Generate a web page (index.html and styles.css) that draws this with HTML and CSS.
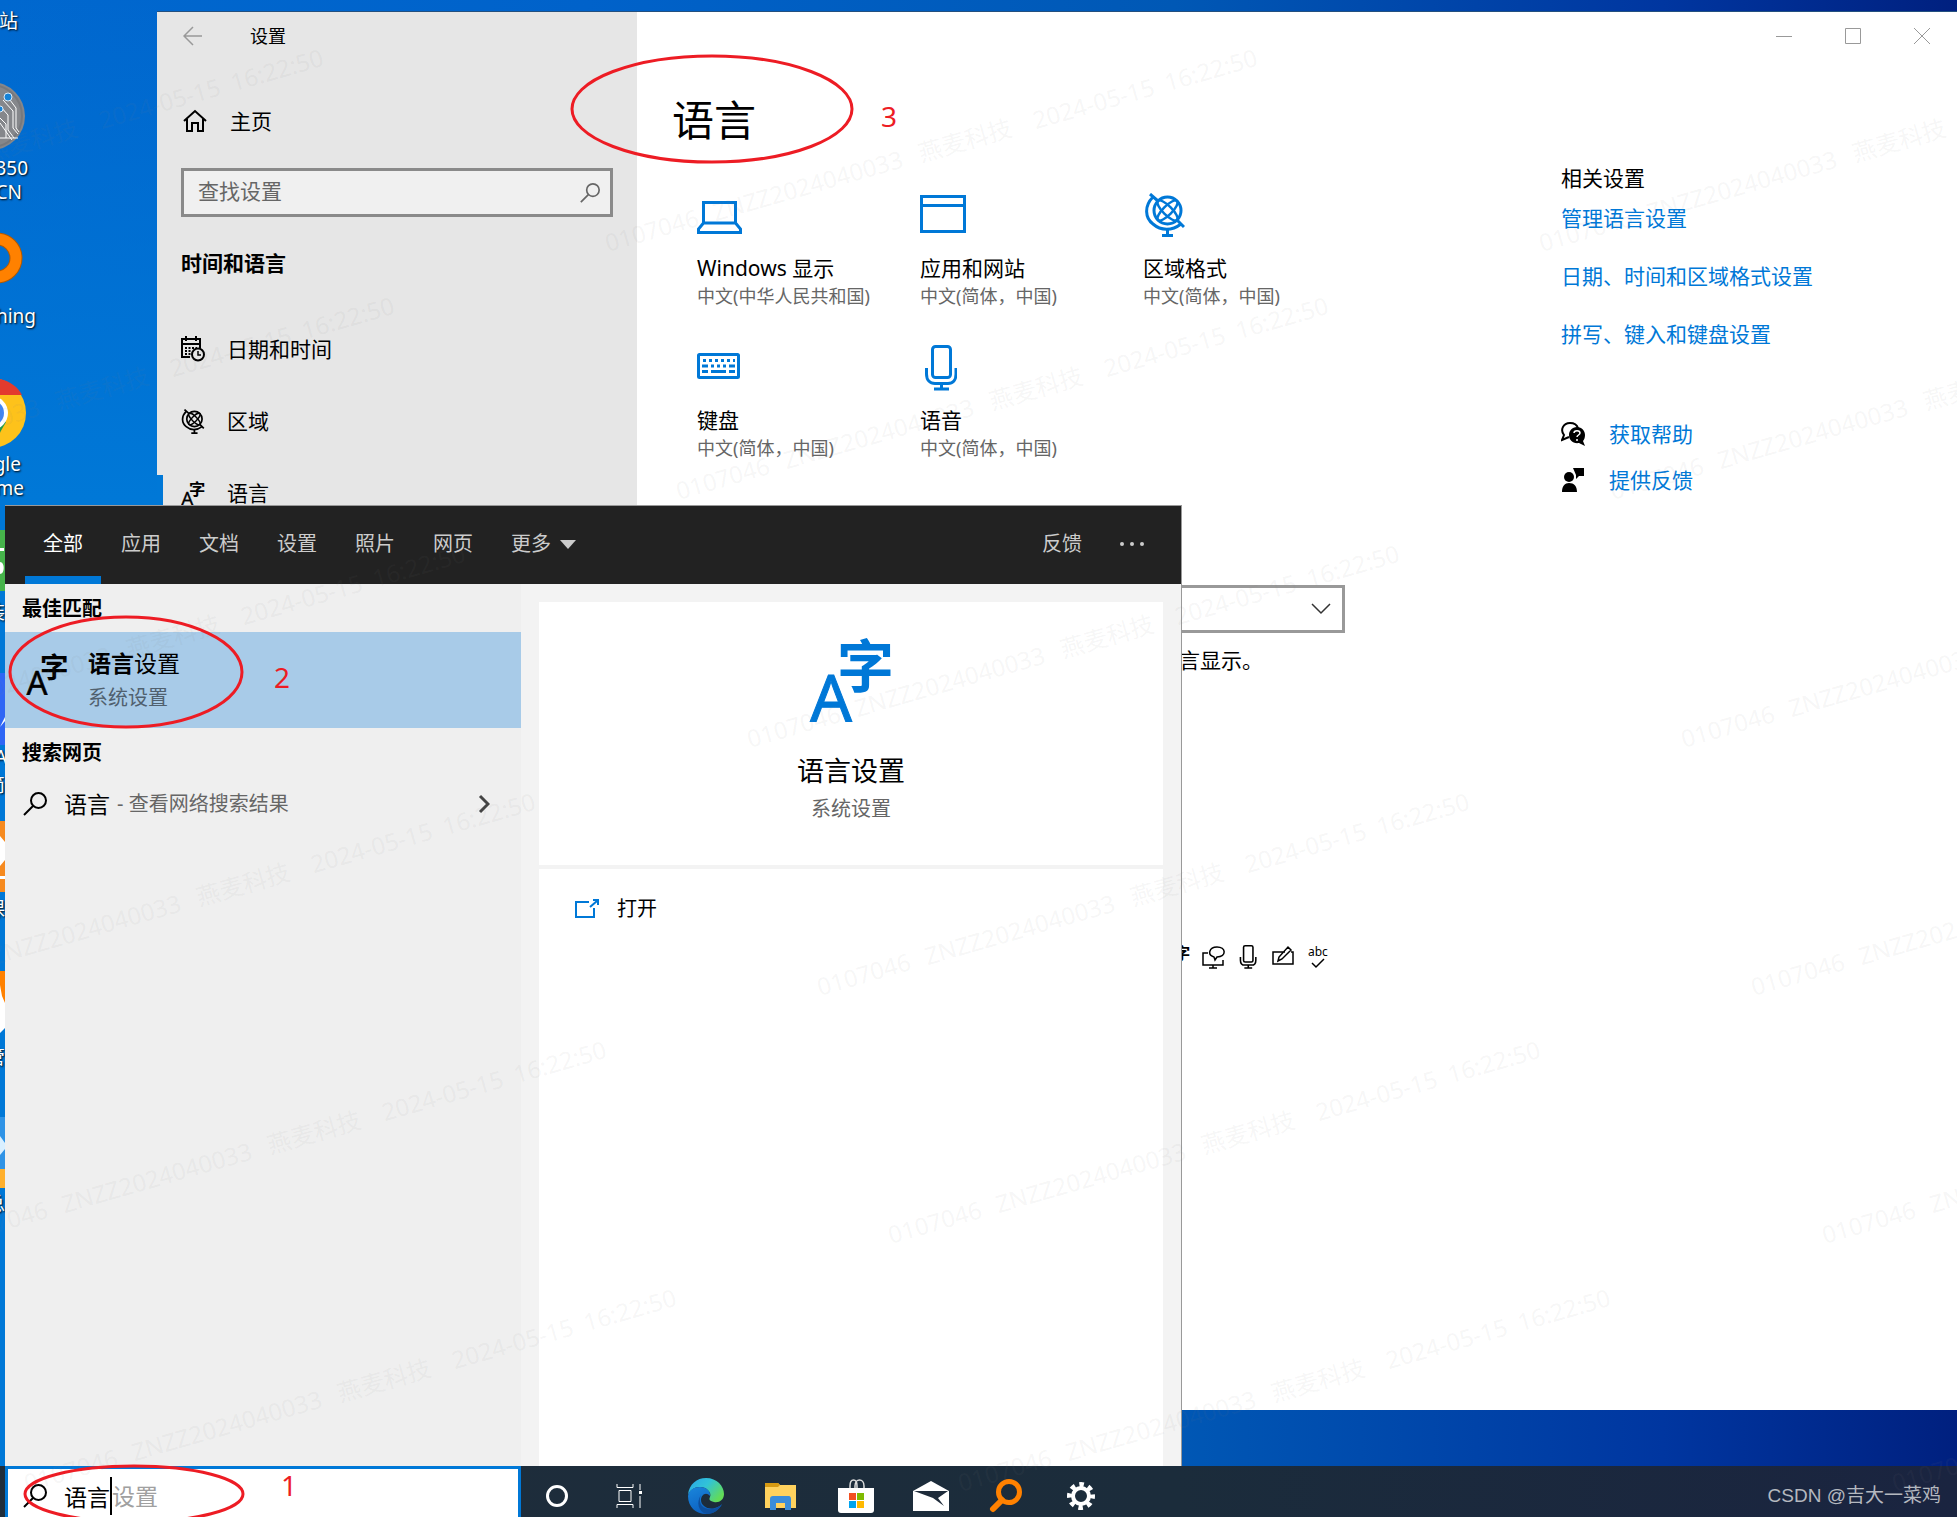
FILE: index.html
```html
<!DOCTYPE html>
<html lang="zh-CN">
<head>
<meta charset="UTF-8">
<title>语言设置</title>
<link rel="stylesheet" href="styles.css">
</head>
<body>

<!-- shared icons -->
<svg class="sprite" aria-hidden="true">
  <symbol id="i-globe" viewBox="0 0 40 44">
    <g fill="none" stroke="currentColor" stroke-width="3">
      <circle cx="22.500" cy="17.500" r="13.500"/>
      <g stroke-width="2.500">
        <ellipse cx="22.500" cy="17.500" rx="4.500" ry="13.500" transform="rotate(45 22.500 17.500)"/>
        <ellipse cx="22.500" cy="17.500" rx="4.500" ry="13.500" transform="rotate(-45 22.500 17.500)"/>
      </g>
      <path d="M5 1 L13 8 M32 27 L39 34 M8 4 C-1 13 0 25 8 31 C16 38 27 38 36 31"/>
      <path d="M22.500 36 V42 M17 42.500 H28"/>
    </g>
  </symbol>
  <symbol id="i-lang" viewBox="0 0 84 84">
    <text x="28" y="49" font-size="57" font-weight="700" class="glyph-cn">字</text>
    <text x="1" y="84" font-size="66" font-weight="400" class="glyph-a">A</text>
  </symbol>
  <symbol id="i-search" viewBox="0 0 24 24">
    <g fill="none" stroke="currentColor" stroke-width="2">
      <circle cx="15.500" cy="8.500" r="7.500"/>
      <path d="M10 14 L1 23"/>
    </g>
  </symbol>
  <symbol id="i-mic" viewBox="0 0 32 46">
    <g fill="none" stroke="currentColor" stroke-width="3">
      <rect x="7.500" y="1.500" width="18" height="31" rx="3"/>
      <path d="M1.500 23 V29 C1.500 35 5 38.500 10 38.500 H23 C28 38.500 31 35 31 29 V23 M16.500 38 V44 M9 44 H24"/>
    </g>
  </symbol>
</svg>

<div class="desktop">

  <svg class="desktop-icons" aria-hidden="true">
    <circle cx="-9" cy="116" r="34" fill="#85878b"/>
    <circle cx="-9" cy="116" r="31" fill="none" stroke="#77797d" stroke-width="2"/>
    <g fill="none" stroke="#fff" stroke-width="1">
      <path d="M3 100 L13 111 V128 L18 134 M0 106 L8 115 V130 L14 138 M0 118 L6 124 V138 M0 123 L12 140 M0 138 H18 M10 100 L16 108 V128 L19 132"/>
    </g>
    <circle cx="8" cy="97" r="4" fill="#1583d8" stroke="#d7e9f7"/>
    <circle cx="0" cy="109" r="3" fill="#1583d8" stroke="#d7e9f7"/>

    <circle cx="-3" cy="258" r="19" fill="none" stroke="#b35900" stroke-width="13"/>
    <circle cx="-3" cy="258" r="19" fill="none" stroke="#ff8100" stroke-width="11"/>

    <circle cx="-9" cy="413" r="35" fill="#fdc21b"/>
    <path d="M-9 378 C5 378 17 385 22 395 H-9 Z" fill="#e33b2e"/>
    <path d="M-9 448 L6 422 L-9 413 Z" fill="#219a4c"/>
    <circle cx="-9" cy="413" r="17" fill="#fff"/>
    <circle cx="-9" cy="413" r="13" fill="#4285f4"/>

    <rect x="0" y="530" width="5" height="61" fill="#46b44b"/>
    <path d="M0 548 H4 V551 H0 Z M0 562 C5 562 5 574 0 574 Z" fill="#fff"/>
    <rect x="0" y="673" width="5" height="72" fill="#2f66f5"/>
    <path d="M0 727 L5 717 V721 Z" fill="#fff"/>
    <rect x="0" y="821" width="5" height="71" fill="#f68a1f"/>
    <path d="M0 836 L5 842 V860 L0 866 Z M0 876 H5 V879 H0 Z" fill="#fff"/>
    <path d="M0 971 H5 V1025 L0 1010 Z" fill="#ff8100"/>
    <path d="M0 985 L2 996 L5 1003 V1028 L0 1033 Z" fill="#fff"/>
    <rect x="0" y="1117" width="5" height="52" fill="#2f93e6"/>
    <path d="M0 1136 L5 1143 V1149 L0 1155 Z" fill="#d9efff"/>
    <rect x="0" y="1169" width="5" height="19" fill="#ffb02e"/>

    <g class="desktop-label">
      <text x="18" y="28">站</text>
      <text x="28" y="175">350</text>
      <text x="22" y="199">CN</text>
      <text x="36" y="323">hing</text>
      <text x="21" y="471">gle</text>
      <text x="24" y="495">me</text>
      <text x="5" y="619">装</text>
      <text x="7" y="764">A</text>
      <text x="5" y="792">简</text>
      <text x="5" y="916">课</text>
      <text x="5" y="1064">管</text>
      <text x="5" y="1211">总</text>
    </g>
  </svg>

  <!-- Settings window -->
  <div class="settings">
    <nav class="sidebar">
      <div class="sidebar-title">
        <button class="back" aria-label="后退">
          <svg width="20" height="20" viewBox="0 0 20 20"><path d="M19 10 H1 M10 1 L1 10 L10 19" fill="none" stroke="#999" stroke-width="1.500"/></svg>
        </button>
        <span>设置</span>
      </div>
      <a href="#" class="home">
        <svg width="24" height="24" viewBox="0 0 24 24"><path d="M1 12 L12 2 L23 12 M4 10 V22 H9 V14 H15 V22 H20 V10" fill="none" stroke="#000" stroke-width="2"/></svg>
        主页
      </a>
      <div class="find">
        <input type="text" placeholder="查找设置" aria-label="查找设置">
        <svg width="20" height="20"><use href="#i-search"/></svg>
      </div>
      <h2>时间和语言</h2>
      <ul>
        <li><a href="#">
          <svg width="24" height="26" viewBox="0 0 24 26">
            <g fill="none" stroke="#000" stroke-width="2">
              <path d="M9 21 H1 V3 H19 V12 M1 8 H19 M5 0 V5 M15 0 V5"/>
              <circle cx="17" cy="18.500" r="6"/>
              <path d="M17 15 V19 H20" stroke-width="1.500"/>
              <path d="M4 12 H16 M4 15 H11 M4 18 H10" stroke-dasharray="2 1.500"/>
            </g>
          </svg>
          日期和时间</a></li>
        <li><a href="#"><svg width="24" height="25"><use href="#i-globe"/></svg>区域</a></li>
        <li class="selected"><a href="#"><svg width="24" height="24"><use href="#i-lang"/></svg>语言</a></li>
      </ul>
    </nav>

    <div class="settings-main">
      <div class="window-buttons">
        <button aria-label="最小化"><svg width="16" height="16" viewBox="0 0 16 16"><path d="M0 8.500 H16"/></svg></button>
        <button aria-label="最大化"><svg width="16" height="16" viewBox="0 0 16 16"><path d="M0.500 0.500 H15.500 V15.500 H0.500 Z"/></svg></button>
        <button aria-label="关闭"><svg width="16" height="16" viewBox="0 0 16 16"><path d="M0 0 L16 16 M16 0 L0 16"/></svg></button>
      </div>

      <div class="columns">
        <main class="content">
          <h1>语言</h1>
          <div class="tiles">
            <a href="#" class="tile">
              <svg width="45" height="50" viewBox="0 0 45 50"><path d="M6.500 12.500 H38.500 V33 H6.500 Z M6.500 33 L1.500 39 V42.500 H43.500 V39 L38.500 33" fill="none" stroke="currentColor" stroke-width="3"/></svg>
              <span class="name">Windows 显示</span>
              <span class="value">中文(中华人民共和国)</span>
            </a>
            <a href="#" class="tile">
              <svg width="46" height="50" viewBox="0 0 46 50"><path d="M1.500 6.500 H44.500 V41.500 H1.500 Z M1.500 15.500 H44.500" fill="none" stroke="currentColor" stroke-width="3"/></svg>
              <span class="name">应用和网站</span>
              <span class="value">中文(简体，中国)</span>
            </a>
            <a href="#" class="tile">
              <svg width="46" height="50" viewBox="0 0 46 50"><use href="#i-globe" x="2" y="3" width="40" height="44"/></svg>
              <span class="name">区域格式</span>
              <span class="value">中文(简体，中国)</span>
            </a>
            <a href="#" class="tile">
              <svg width="43" height="50" viewBox="0 0 43 50">
                <rect x="1.500" y="12.500" width="40" height="23" rx="1" fill="none" stroke="currentColor" stroke-width="3"/>
                <path d="M6 18.500 H38" stroke="currentColor" stroke-width="3" stroke-dasharray="3 3"/>
                <path d="M5 24 H11 M14 24 H17 M20 24 H23 M26 24 H29 M32 24 H38 M5 29.500 H11 M14 29.500 H29 M32 29.500 H38" stroke="currentColor" stroke-width="3"/>
              </svg>
              <span class="name">键盘</span>
              <span class="value">中文(简体，中国)</span>
            </a>
            <a href="#" class="tile">
              <svg width="43" height="50" viewBox="0 0 43 50"><use href="#i-mic" x="5" y="3" width="32" height="46"/></svg>
              <span class="name">语音</span>
              <span class="value">中文(简体，中国)</span>
            </a>
          </div>

          <div class="display-language">
            <select aria-label="Windows 显示语言"><option></option></select>
            <svg width="20" height="12" viewBox="0 0 20 12"><path d="M1 1 L10 10 L19 1" fill="none" stroke="#333" stroke-width="1.500"/></svg>
          </div>
          <p class="note">言显示。</p>

          <div class="features">
            <svg width="24" height="24"><use href="#i-lang"/></svg>
            <svg width="24" height="24" viewBox="0 0 24 24"><path d="M7 8 H2 V20 H22 V15 M12 20 V23 M8 23 H16 M16 12 L14 15 L13 12 C6 10 8 2 16 2 C25 2 26 11 16 12 Z" fill="none" stroke="#000" stroke-width="1.500"/></svg>
            <svg width="24" height="24"><use href="#i-mic"/></svg>
            <svg width="24" height="24" viewBox="0 0 24 24"><path d="M14 7 H2 V19 H22 V7 H20 M7 16 L8 12 L17 2 L20 5 L11 14 Z" fill="none" stroke="#000" stroke-width="1.500"/></svg>
            <svg width="24" height="24" viewBox="0 0 24 24"><text x="2" y="11" font-size="12">abc</text><path d="M6 18 L10 22 L18 14" fill="none" stroke="#000" stroke-width="1.500"/></svg>
          </div>
        </main>

        <aside class="related">
          <h3>相关设置</h3>
          <a href="#">管理语言设置</a>
          <a href="#">日期、时间和区域格式设置</a>
          <a href="#">拼写、键入和键盘设置</a>
          <div class="support">
            <a href="#">
              <svg width="24" height="24" viewBox="0 0 24 24">
                <path d="M8 15 L1 18 L3 13 C-1 8 2 1 9 1 C13 1 16 3 17 6" fill="none" stroke="#000" stroke-width="2"/>
                <path d="M16 5 C21 5 24 9 24 13 C24 16 23 18 22 19 L24 24 L18 21 C12 22 8 18 8 13 C8 9 11 5 16 5 Z"/>
                <path d="M13 11 C13 8 19 8 19 11 C19 13 16 13 16 15 M16 17 V19" fill="none" stroke="#fff" stroke-width="1.500"/>
              </svg>
              获取帮助</a>
            <a href="#">
              <svg width="24" height="24" viewBox="0 0 24 24">
                <circle cx="8" cy="9" r="5"/>
                <path d="M1 24 C1 18 4 15 8 15 C13 15 16 18 16 24 Z M12 0 H23 V8 H18 L15 11 V7 Z"/>
              </svg>
              提供反馈</a>
          </div>
        </aside>
      </div>
    </div>
  </div>

  <!-- Search flyout -->
  <div class="flyout">
    <div class="flyout-tabs">
      <button class="active">全部</button>
      <button>应用</button>
      <button>文档</button>
      <button>设置</button>
      <button>照片</button>
      <button>网页</button>
      <button>更多<svg width="16" height="9" viewBox="0 0 16 9"><path d="M0 0 H16 L8 9 Z" fill="currentColor"/></svg></button>
      <button class="feedback">反馈</button>
      <button class="dots" aria-label="更多选项"><svg width="24" height="4" viewBox="0 0 24 4" fill="currentColor"><circle cx="2" cy="2" r="2"/><circle cx="12" cy="2" r="2"/><circle cx="22" cy="2" r="2"/></svg></button>
    </div>
    <div class="flyout-body">
      <div class="results">
        <h4>最佳匹配</h4>
        <a href="#" class="best">
          <svg width="42" height="42"><use href="#i-lang"/></svg>
          <span>
            <span class="best-name"><b>语言</b>设置</span>
            <span class="best-kind">系统设置</span>
          </span>
        </a>
        <h4>搜索网页</h4>
        <a href="#" class="web">
          <svg width="24" height="24"><use href="#i-search"/></svg>
          <span class="term">语言</span>
          <span class="hint">- 查看网络搜索结果</span>
          <svg class="arrow" width="12" height="20" viewBox="0 0 12 20"><path d="M2 2 L10 10 L2 18" fill="none" stroke="#444" stroke-width="3"/></svg>
        </a>
      </div>
      <div class="preview">
        <div class="card summary">
          <svg width="84" height="84"><use href="#i-lang"/></svg>
          <h3>语言设置</h3>
          <p>系统设置</p>
        </div>
        <div class="card actions">
          <button>
            <svg width="24" height="20" viewBox="0 0 24 20"><path d="M14 3 H1 V18 H19 V9 M15 8 L22 2 M18 1 H23 V6" fill="none" stroke="#0078d7" stroke-width="2"/></svg>
            打开
          </button>
        </div>
      </div>
    </div>
  </div>

  <!-- Taskbar -->
  <div class="taskbar">
    <div class="task-search">
      <svg width="24" height="24"><use href="#i-search"/></svg>
      <div class="task-input">
        <input type="text" value="语言" aria-label="搜索">
        <span class="suggest">设置</span>
      </div>
    </div>
    <div class="task-system">
      <button aria-label="Cortana"><svg width="24" height="24" viewBox="0 0 24 24"><circle cx="12" cy="12" r="9.500" fill="none" stroke="#fff" stroke-width="3"/></svg></button>
      <button aria-label="任务视图"><svg width="26" height="24" viewBox="0 0 26 24"><path d="M1 0 V3.500 H17 V0 M3 6.500 H15 V17.500 H3 Z M1 24 V20.500 H17 V24 M24 0 V6 M24 12 V24" fill="none" stroke="#fff" stroke-width="1"/><rect x="23" y="7" width="3" height="3" fill="#fff"/></svg></button>
    </div>
    <div class="task-apps">
      <button aria-label="Edge">
        <svg width="36" height="36" viewBox="0 0 36 36">
          <defs>
            <linearGradient id="edge-top" x1="0" y1="0" x2="1" y2="0.600"><stop offset="0" stop-color="#2aa5e8"/><stop offset="0.500" stop-color="#31c3d8"/><stop offset="1" stop-color="#62db58"/></linearGradient>
            <linearGradient id="edge-low" x1="0" y1="0" x2="0.500" y2="1"><stop offset="0" stop-color="#1a86db"/><stop offset="1" stop-color="#0b5fc0"/></linearGradient>
          </defs>
          <path d="M0 17 C1 6 9 0 18 0 C29 0 36 8 36 16 C36 22 31 25 26 24 C21 23 21 21 22 19 C24 14 18 9 12 9 C6 9 2 12 0 17 Z" fill="url(#edge-top)"/>
          <path d="M0 18 C1 12 6 9 12 9 C18 9 23 13 22 18 C18 13 13 17 13 22 C13 28 20 32 27 30 C31 29 33 27 34 26 C31 32 25 36 18 36 C8 36 0 29 0 18 Z" fill="url(#edge-low)"/>
          <path d="M13 17 C10 23 13 30 20 31 C26 32 31 29 34 26 C31 33 24 36 19 36 C10 34 8 24 13 17 Z" fill="#0d4f9e"/>
        </svg>
      </button>
      <button aria-label="文件资源管理器">
        <svg width="34" height="28" viewBox="0 0 34 28">
          <path d="M1 1 H14 L16 3 H32 V26 H1 Z" fill="#ffd25e"/>
          <path d="M1 1 H14 L16 3 L14 5 H1 Z" fill="#d79a12"/>
          <path d="M6 28 V17 C6 15 7 14 9 14 H25 C26 14 27 15 27 17 V28 H21 V21 H12 V28 Z" fill="#3a8ddb"/>
        </svg>
      </button>
      <button aria-label="应用商店">
        <svg width="36" height="36" viewBox="0 0 36 36">
          <path d="M12 11 V8 C12 0 19 0 19 8 V11 M17 11 V8 C17 0 26 0 26 8 V11" fill="none" stroke="#ddd" stroke-width="1.500"/>
          <path d="M0 10 H36 V32 C36 34 35 35 33 35 H3 C1 35 0 34 0 32 Z" fill="#fff"/>
          <rect x="11" y="15" width="7" height="7" fill="#f25022"/><rect x="19" y="15" width="7" height="7" fill="#7fba00"/>
          <rect x="11" y="23" width="7" height="7" fill="#00a4ef"/><rect x="19" y="23" width="7" height="7" fill="#ffb900"/>
        </svg>
      </button>
      <button aria-label="邮件">
        <svg width="36" height="30" viewBox="0 0 36 30"><path d="M0 10 L18 0 L36 10 V30 H0 Z" fill="#fff"/><path d="M1 10 H35 L25 17 L31 25 L20 17 Z" fill="#1e2b3a"/></svg>
      </button>
      <button aria-label="Everything">
        <svg width="34" height="34" viewBox="0 0 34 34"><circle cx="20" cy="13" r="10.500" fill="none" stroke="#ff8100" stroke-width="5"/><path d="M13 21 L4 30" stroke="#ff8100" stroke-width="6" stroke-linecap="round"/></svg>
      </button>
      <button aria-label="设置">
        <svg width="28" height="28" viewBox="0 0 28 28"><circle cx="14" cy="14" r="8" fill="none" stroke="#fff" stroke-width="4"/><circle cx="14" cy="14" r="11.500" fill="none" stroke="#fff" stroke-width="5" stroke-dasharray="4.500 4.530" stroke-dashoffset="2"/></svg>
      </button>
    </div>
    <span class="credit">CSDN @吉大一菜鸡</span>
  </div>

  <!-- watermark and hand-drawn marks -->
  <svg class="overlay" aria-hidden="true">
    <defs>
      <g id="wm" transform="rotate(-16)">
        <text><tspan x="0">0107046</tspan><tspan x="112">ZNZZ2024040033</tspan><tspan x="326">燕麦科技</tspan><tspan x="445">2024-05-15</tspan><tspan x="582">16:22:50</tspan></text>
      </g>
      <g id="wm-row">
        <use href="#wm" x="-934"/><use href="#wm"/><use href="#wm" x="934"/>
      </g>
    </defs>
    <g class="watermark">
      <use href="#wm-row" x="608" y="252"/>
      <use href="#wm-row" x="679" y="500"/>
      <use href="#wm-row" x="750" y="748"/>
      <use href="#wm-row" x="820" y="996"/>
      <use href="#wm-row" x="891" y="1244"/>
      <use href="#wm-row" x="961" y="1492"/>
    </g>
    <g class="marks">
      <ellipse cx="712" cy="109" rx="140" ry="53"/>
      <ellipse cx="126" cy="672" rx="116" ry="55"/>
      <ellipse cx="134" cy="1494" rx="109" ry="28"/>
      <text x="881" y="127">3</text>
      <text x="274" y="688">2</text>
      <text x="281" y="1496">1</text>
    </g>
  </svg>
</div>

</body>
</html>
```

FILE: styles.css
```css
* {
  box-sizing: border-box;
}

body {
  margin: 0;
  font-family: "Noto Sans", "Noto Sans CJK SC", sans-serif;
  font-size: 21px;
  line-height: 28px;
  color: #000;
}

h1, h2, h3, h4, p, ul {
  margin: 0;
  padding: 0;
  font-weight: 400;
}

ul {
  list-style: none;
}

a {
  color: inherit;
  text-decoration: none;
}

button {
  border: none;
  padding: 0;
  background: none;
  font: inherit;
  color: inherit;
}

svg {
  display: block;
  flex-shrink: 0;
}

.sprite {
  position: absolute;
  width: 0;
  height: 0;
}

.glyph-cn {
  font-family: "Noto Sans CJK SC", sans-serif;
  fill: currentColor;
}

.glyph-a {
  font-family: "Noto Sans", sans-serif;
  fill: currentColor;
  stroke: currentColor;
  stroke-width: 1;
}

.desktop {
  position: relative;
  height: 100vh;
  overflow: hidden;
  background:
    linear-gradient(to bottom, rgba(0, 120, 215, 0) 0, rgba(0, 120, 215, 1) 500px) 0 0 / 157px 100% no-repeat,
    linear-gradient(to right, #0068cf 0%, #0062ca 30%, #0058b5 60%, #0036a0 85%, #00207f 100%);
}

.desktop-icons {
  position: absolute;
  top: 0;
  left: 0;
  width: 157px;
  height: 100%;
}

.desktop-label {
  font-size: 19px;
  fill: #fff;
  text-anchor: end;
  text-shadow: 1px 1px 2px #000;
}

/* settings window */
.settings {
  position: absolute;
  top: 11px;
  left: 157px;
  right: 0;
  bottom: 107px;
  display: flex;
  border-top: 1px solid #24507f;
  background: #fff;
}

.sidebar {
  width: 480px;
  flex-shrink: 0;
  background: #e6e6e6;
}

.sidebar-title {
  display: flex;
  align-items: center;
  gap: 47px;
  height: 48px;
  padding-left: 26px;
  font-size: 18px;
}

.home {
  display: flex;
  align-items: center;
  gap: 23px;
  height: 40px;
  margin-top: 41px;
  padding-left: 26px;
}

.find {
  display: flex;
  align-items: center;
  height: 49px;
  margin: 27px 24px 0;
  padding: 0 10px 0 14px;
  border: 3px solid #8a8a8a;
  background: #f0f0f0;
  color: #666;
}

.find input {
  flex: 1;
  min-width: 0;
  height: 28px;
  margin-bottom: 3px;
  padding: 0;
  border: none;
  outline: none;
  background: none;
  font: inherit;
}

.find input::placeholder {
  color: #666;
  opacity: 1;
}

.sidebar h2 {
  margin: 32px 24px 36px;
  font-size: 21px;
  font-weight: 700;
}

.sidebar li {
  position: relative;
}

.sidebar li a {
  display: flex;
  align-items: center;
  gap: 22px;
  height: 72px;
  padding-left: 24px;
}

.sidebar .selected::before {
  content: "";
  position: absolute;
  left: 0;
  top: 18px;
  width: 6px;
  height: 38px;
  background: #0078d7;
}

.settings-main {
  flex: 1;
  min-width: 0;
}

.window-buttons {
  display: flex;
  justify-content: flex-end;
  height: 48px;
  padding-right: 1px;
}

.window-buttons button {
  display: flex;
  align-items: center;
  justify-content: center;
  width: 69px;
}

.window-buttons path {
  fill: none;
  stroke: #999;
  stroke-width: 1;
}

.columns {
  display: flex;
}

.content {
  flex: 1;
  min-width: 0;
  padding: 30px 0 0 35px;
}

.content h1 {
  font-size: 42px;
  line-height: 60px;
}

.tiles {
  display: grid;
  grid-template-columns: repeat(3, 223px);
  row-gap: 32px;
  margin: 40px 0 123px;
  padding-left: 25px;
}

.tile {
  display: flex;
  flex-direction: column;
  white-space: nowrap;
}

.tile svg {
  margin-bottom: 14px;
  color: #0078d7;
}

.tile .value {
  font-size: 18px;
  color: #666;
}

.display-language {
  position: relative;
  width: 673px;
}

.display-language select {
  display: block;
  appearance: none;
  width: 100%;
  height: 48px;
  border: 3px solid #999;
  border-radius: 0;
  background: #fff;
  font: inherit;
}

.display-language svg {
  position: absolute;
  right: 14px;
  top: 18px;
  pointer-events: none;
}

.note {
  margin-top: 13px;
  padding-left: 507px;
}

.features {
  display: flex;
  justify-content: flex-end;
  gap: 11px;
  width: 673px;
  margin-top: 271px;
  padding-right: 15px;
}

.related {
  display: flex;
  flex-direction: column;
  align-items: flex-start;
  gap: 30px;
  width: 396px;
  padding-top: 104px;
  color: #0078d7;
}

.related h3 {
  margin-bottom: -18px;
  font-size: 21px;
  color: #000;
}

.support {
  display: flex;
  flex-direction: column;
  gap: 18px;
  margin-top: 42px;
}

.support a {
  display: flex;
  align-items: center;
  gap: 24px;
}

.support svg {
  color: #000;
}

/* search flyout */
.flyout {
  position: absolute;
  top: 505px;
  left: 5px;
  right: 775px;
  bottom: 51px;
  display: flex;
  flex-direction: column;
  border-top: 1px solid #999;
  border-right: 1px solid #999;
  font-size: 20px;
}

.flyout-tabs {
  display: flex;
  gap: 2px;
  height: 78px;
  padding: 0 19px 0 20px;
  background: #222;
  color: #ccc;
}

.flyout-tabs button {
  display: flex;
  align-items: center;
  gap: 9px;
  padding: 0 18px;
  border-top: 6px solid transparent;
  border-bottom: 8px solid transparent;
}

.flyout-tabs .active {
  border-bottom-color: #0078d7;
  color: #fff;
}

.flyout-tabs .feedback {
  margin-left: auto;
}

.flyout-body {
  display: flex;
  flex: 1;
  min-height: 0;
}

.results {
  width: 516px;
  flex-shrink: 0;
  background: #efefef;
}

.results h4 {
  padding: 11px 17px 9px;
  font-size: 20px;
  font-weight: 700;
}

.best {
  display: flex;
  align-items: center;
  gap: 20px;
  height: 96px;
  padding-left: 21px;
  background: #a8cbe8;
}

.best svg {
  margin-bottom: 12px;
}

.best-name,
.best-kind {
  display: block;
}

.best-name {
  margin-bottom: 7px;
  font-size: 23px;
}

.best-kind {
  font-size: 20px;
  color: #50606e;
}

.web {
  display: flex;
  align-items: center;
  height: 56px;
  padding: 0 31px 0 18px;
}

.web .term {
  margin: 0 7px 0 17px;
  font-size: 23px;
}

.web .hint {
  color: #666;
}

.web .arrow {
  margin-left: auto;
}

.preview {
  display: flex;
  flex: 1;
  flex-direction: column;
  gap: 4px;
  min-width: 0;
  padding: 18px 18px 0;
  background: #f3f3f3;
}

.card {
  background: #fff;
}

.summary {
  display: flex;
  flex-direction: column;
  align-items: center;
  padding: 36px 0 42px;
}

.summary svg {
  color: #0078d7;
}

.summary h3 {
  margin: 31px 0 6px;
  font-size: 27px;
  line-height: 36px;
}

.summary p {
  color: #666;
}

.actions {
  flex: 1;
  padding: 20px 36px;
}

.actions button {
  display: flex;
  align-items: center;
  gap: 18px;
  height: 40px;
}

/* taskbar, its lower edge runs off the screen */
.taskbar {
  position: absolute;
  left: 0;
  right: 0;
  bottom: -9px;
  display: flex;
  height: 60px;
  padding-left: 5px;
  background: linear-gradient(to right, #1f2d3b 0%, #1b2c3b 60%, #1a2440 100%);
}

.task-search {
  display: flex;
  align-items: center;
  gap: 17px;
  width: 516px;
  padding-left: 15px;
  border: 3px solid #0078d7;
  background: #fff;
}

.task-input {
  display: flex;
  align-items: center;
  font-size: 23px;
}

.task-input input {
  width: 48px;
  height: 38px;
  padding: 0;
  border: none;
  border-right: 2px solid #000;
  outline: none;
  font: inherit;
}

.suggest {
  color: #a0a0a0;
}

.task-system,
.task-apps {
  display: flex;
}

.task-apps {
  margin-left: 3px;
}

.taskbar button {
  display: flex;
  align-items: center;
  justify-content: center;
  width: 75px;
}

.task-system button {
  width: 72px;
}

.credit {
  align-self: center;
  margin-left: auto;
  padding-right: 16px;
  font-family: "Liberation Sans", "Noto Sans CJK SC", sans-serif;
  font-size: 19px;
  color: #b4b8bf;
}

.overlay {
  position: absolute;
  top: 0;
  left: 0;
  width: 100%;
  height: 100%;
  pointer-events: none;
}

.watermark {
  font-size: 24px;
  fill: rgba(128, 128, 128, 0.08);
}

.marks ellipse {
  fill: none;
  stroke: #ed1c24;
  stroke-width: 3;
}

.marks text {
  font-size: 28px;
  fill: #ed1c24;
}
```
